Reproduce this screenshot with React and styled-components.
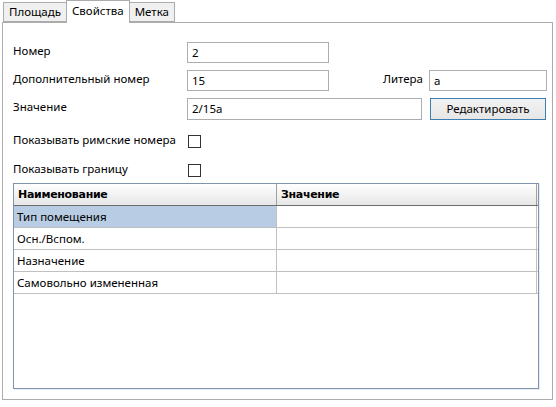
import React from 'react'
import styled, { createGlobalStyle } from 'styled-components'

const GlobalStyle = createGlobalStyle`
  html, body {
    margin: 0;
    padding: 0;
    background: #ffffff;
  }
  body {
    font-family: "Noto Sans", "Open Sans", sans-serif;
    font-size: 11.5px;
    color: #000;
  }
`

let Window = styled.div`
  width: 556px;
  height: 407px;
  padding: 0 0 0 2px;
  box-sizing: border-box;
`

let TabStrip = styled.div`
  display: flex;
  align-items: flex-end;
  height: 23px;
  padding-left: 1px;
  position: relative;
  z-index: 1;
`

let Tab = styled.div`
  box-sizing: border-box;
  height: ${p => (p.active ? '23px' : '20px')};
  padding: 0 5px;
  margin: ${p => (p.active ? '0 -1px' : '0 0 1px 0')};
  border: 1px solid #acacac;
  border-bottom: ${p => (p.active ? 'none' : '1px solid #acacac')};
  background: ${p => (p.active ? '#ffffff' : '#f0f0f0')};
  line-height: ${p => (p.active ? '20px' : '18px')};
  font-size: 11.5px;
  white-space: nowrap;
  position: relative;
  z-index: ${p => (p.active ? 2 : 1)};
`

let Panel = styled.div`
  box-sizing: border-box;
  width: 551px;
  height: 378px;
  margin-top: -1px;
  border: 1px solid #acacac;
  background: #ffffff;
  padding: 19px 5px 10px 10px;
  display: flex;
  flex-direction: column;
`

let Row = styled.div`
  display: flex;
  align-items: center;
  height: 21px;
  margin-bottom: 7px;
`

let Label = styled.div`
  width: 174px;
  flex-shrink: 0;
  margin-top: -4px;
  white-space: nowrap;
`

let SideLabel = styled.div`
  flex: 1;
  text-align: right;
  padding-right: 6px;
  margin-top: -4px;
`

let Input = styled.div`
  box-sizing: border-box;
  width: ${p => p.w}px;
  height: ${p => p.h || 21}px;
  border: 1px solid #abadb3;
  background: #fff;
  padding: 0 4px;
  line-height: 20px;
  flex-shrink: 0;
`

let Button = styled.div`
  box-sizing: border-box;
  width: 116px;
  height: 22px;
  margin-left: 8px;
  border: 1px solid #3c7fb1;
  background: linear-gradient(#f2f2f2, #e6e6e6);
  text-align: center;
  line-height: 19px;
`

let CheckRow = styled.div`
  display: flex;
  align-items: center;
  height: 13px;
  margin-top: ${p => p.top}px;
`

let Box = styled.div`
  box-sizing: border-box;
  width: 13px;
  height: 13px;
  border: 1px solid #333;
  background: #fff;
  margin-left: 1px;
`

let Grid = styled.div`
  box-sizing: border-box;
  margin-top: ${p => p.top}px;
  width: 526px;
  height: 207px;
  border: 1px solid #8094ad;
  box-shadow: 1px 1px 0 #e8ecf2;
  background: #fff;
`

let GridRow = styled.div`
  display: grid;
  grid-template-columns: 263px 260px;
  height: 22px;
  border-bottom: 1px solid ${p => (p.header ? '#6d6d6d' : '#c0c0c0')};
  background: ${p => (p.header ? 'linear-gradient(#ffffff, #f0f0f0 60%, #e6e6e6)' : '#fff')};
  box-sizing: border-box;
`

let Cell = styled.div`
  box-sizing: border-box;
  border-right: 1px solid ${p => (p.header ? '#a0a0a0' : '#c0c0c0')};
  padding-left: ${p => (p.header ? 4 : 3)}px;
  line-height: 21px;
  background: ${p => (p.selected ? '#b8cce4' : 'transparent')};
  font-family: ${p => (p.header ? '"DejaVu Sans", Verdana, sans-serif' : 'inherit')};
  font-weight: ${p => (p.header ? 'bold' : 'normal')};
  font-size: ${p => (p.header ? '11px' : '11.5px')};
  letter-spacing: ${p => (p.header ? '-0.3px' : '0')};
  white-space: nowrap;
  overflow: hidden;
`

const rows = ['Тип помещения', 'Осн./Вспом.', 'Назначение', 'Самовольно измененная']

export default function App() {
  return (
    <Window>
      <GlobalStyle />
      <TabStrip>
        <Tab>Площадь</Tab>
        <Tab active>Свойства</Tab>
        <Tab>Метка</Tab>
      </TabStrip>
      <Panel>
        <Row>
          <Label>Номер</Label>
          <Input w={142}>2</Input>
        </Row>
        <Row>
          <Label>Дополнительный номер</Label>
          <Input w={142}>15</Input>
          <SideLabel>Литера</SideLabel>
          <Input w={118}>а</Input>
        </Row>
        <Row>
          <Label>Значение</Label>
          <Input w={235} h={22}>2/15а</Input>
          <Button>Редактировать</Button>
        </Row>
        <CheckRow top={9}>
          <Label>Показывать римские номера</Label>
          <Box />
        </CheckRow>
        <CheckRow top={16}>
          <Label>Показывать границу</Label>
          <Box />
        </CheckRow>
        <Grid top={6}>
          <GridRow header>
            <Cell header>Наименование</Cell>
            <Cell header>Значение</Cell>
          </GridRow>
          {rows.map((r, i) => (
            <GridRow key={r}>
              <Cell selected={i === 0}>{r}</Cell>
              <Cell />
            </GridRow>
          ))}
        </Grid>
      </Panel>
    </Window>
  )
}
